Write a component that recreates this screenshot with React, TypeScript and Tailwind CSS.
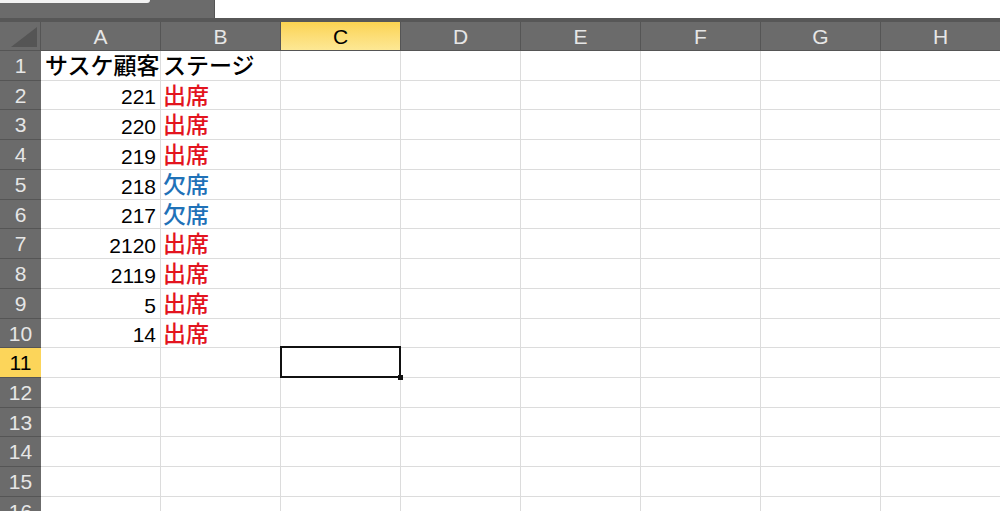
import React from "react";

type Cell = { text: string; kind: "num" | "label" | "red" | "blue" };

const columns = ["A", "B", "C", "D", "E", "F", "G", "H"];
const activeCol = 2;
const activeRow = 11;

// rows 1..16, heights follow the sheet's uneven pixel rounding
const rowHeights = ["h-[30px]", "h-[29px]", "h-[30px]", "h-[30px]", "h-[30px]", "h-[29px]", "h-[30px]", "h-[30px]", "h-[30px]", "h-[29px]", "h-[30px]", "h-[30px]", "h-[29px]", "h-[30px]", "h-[30px]", "h-[30px]"];

const data: Record<number, [Cell, Cell]> = {
  1: [{ text: "サスケ顧客", kind: "label" }, { text: "ステージ", kind: "label" }],
  2: [{ text: "221", kind: "num" }, { text: "出席", kind: "red" }],
  3: [{ text: "220", kind: "num" }, { text: "出席", kind: "red" }],
  4: [{ text: "219", kind: "num" }, { text: "出席", kind: "red" }],
  5: [{ text: "218", kind: "num" }, { text: "欠席", kind: "blue" }],
  6: [{ text: "217", kind: "num" }, { text: "欠席", kind: "blue" }],
  7: [{ text: "2120", kind: "num" }, { text: "出席", kind: "red" }],
  8: [{ text: "2119", kind: "num" }, { text: "出席", kind: "red" }],
  9: [{ text: "5", kind: "num" }, { text: "出席", kind: "red" }],
  10: [{ text: "14", kind: "num" }, { text: "出席", kind: "red" }]
};

function CellText({ cell, first }: { cell: Cell; first: boolean }) {
  if (cell.kind === "num") {
    return <span className="ml-auto pr-[4px] pt-[3px] text-[21px] leading-none text-black">{cell.text}</span>;
  }
  const color = cell.kind === "red" ? "text-[#e3141e]" : cell.kind === "blue" ? "text-[#1f72b8]" : "text-black";
  return (
    <span className={`${first ? "pl-[4px]" : "pl-[2px]"} pt-[2px] whitespace-nowrap text-[23px] font-medium leading-none ${color}`}>
      {cell.text}
    </span>
  );
}

export default function App() {
  return (
    <div
      className="h-[511px] w-[1000px] overflow-hidden bg-white"
      style={{ fontFamily: '"Liberation Sans", "Noto Sans CJK JP", sans-serif' }}
    >
      {/* sheet tab strip */}
      <div className="flex h-[18px]">
        <div className="w-[215px] border-r border-[#555] bg-[#6b6b6b]">
          <div className="h-[3px] w-[150px] rounded-br-[8px] bg-[#f2f2f2]" />
        </div>
        <div className="flex-1 bg-white" />
      </div>

      {/* column headers */}
      <div className="flex h-[33px] border-t-4 border-[#575757] bg-[#6b6b6b]">
        <div className="relative w-[41px] shrink-0 border-r border-b border-[#555]">
          <svg className="absolute bottom-[3px] right-[3px]" width="26" height="20" viewBox="0 0 26 20">
            <polygon points="26,0 26,20 0,20" fill="#555555" />
          </svg>
        </div>
        {columns.map((c, i) => (
          <div
            key={c}
            className={`flex w-[120px] shrink-0 items-center justify-center border-r border-b border-[#555] pt-[1px] text-[21px] ${
              i === activeCol
                ? "bg-gradient-to-b from-[#fbd350] to-[#fde894] text-black"
                : "text-[#e6e6e6]"
            }`}
          >
            {c}
          </div>
        ))}
      </div>

      {/* rows */}
      {rowHeights.map((h, idx) => {
        const row = idx + 1;
        const cells = data[row];
        return (
          <div key={row} className={`flex ${h}`}>
            <div
              className={`flex w-[41px] shrink-0 items-center justify-center border-b border-[#555] pt-[1px] text-[21px] ${
                row === activeRow ? "bg-[#fcd55a] text-black" : "bg-[#6b6b6b] text-[#e6e6e6]"
              }`}
            >
              {row}
            </div>
            {columns.map((c, ci) => (
              <div
                key={c}
                className="relative flex w-[120px] shrink-0 items-center overflow-visible border-r border-b border-[#dcdcdc]"
              >
                {cells && ci < 2 && <CellText cell={cells[ci]} first={ci === 0} />}
                {row === activeRow && ci === activeCol && (
                  <div className="absolute -left-px -top-[2px] z-10 h-[32px] w-[121px] border-2 border-[#111]">
                    <div className="absolute -bottom-[4px] -right-[4px] h-[5px] w-[5px] bg-[#111]" />
                  </div>
                )}
              </div>
            ))}
          </div>
        );
      })}
    </div>
  );
}
